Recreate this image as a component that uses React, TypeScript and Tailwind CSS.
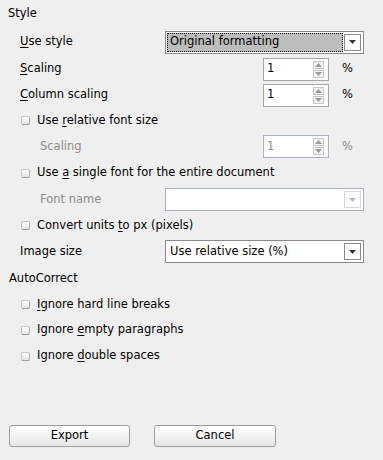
import type { ReactNode } from "react";

const Tri = ({ up, color = "#333" }: { up?: boolean; color?: string }) => (
  <svg width="7" height="4" viewBox="0 0 7 4">
    <path d={up ? "M0 4 L3.5 0 L7 4 Z" : "M0 0 L7 0 L3.5 4 Z"} fill={color} />
  </svg>
);

const Check = ({ children }: { children: ReactNode }) => (
  <div className="flex items-center">
    <div className="ml-[21px] w-[9px] h-[9px] rounded-[2px] border border-[#c4c4c4] border-b-[#9a9a9a] border-r-[#b0b0b0] bg-gradient-to-b from-white to-[#e4e4e4]" />
    <span className="ml-[7px]">{children}</span>
  </div>
);

const Spin = ({ disabled }: { disabled?: boolean }) => (
  <div className="ml-auto flex items-center">
    <div
      className={`w-[66px] h-[23px] bg-white border flex items-center pl-[3px] pr-[4px] ${
        disabled ? "border-[#a9b4c2] text-[#8c8c8c]" : "border-[#a6a6a6]"
      }`}
    >
      <span className="flex-1">1</span>
      <div className="flex flex-col gap-[1px]">
        <div className="w-[11px] h-[8px] border border-[#c6c6c6] bg-[#f4f4f4] flex items-center justify-center">
          <Tri up color="#999" />
        </div>
        <div className="w-[11px] h-[8px] border border-[#c6c6c6] bg-[#f4f4f4] flex items-center justify-center">
          <Tri color="#999" />
        </div>
      </div>
    </div>
    <span className={`ml-[13px] mr-[30px] ${disabled ? "text-[#8c8c8c]" : ""}`}>%</span>
  </div>
);

const Combo = ({
  text,
  focused,
  disabled,
}: {
  text?: string;
  focused?: boolean;
  disabled?: boolean;
}) => (
  <div
    className={`ml-auto mr-[19px] w-[199px] h-[23px] bg-white border flex ${
      disabled ? "border-[#a9b4c2]" : "border-[#8a8a8a]"
    }`}
  >
    <div className="flex-1 p-[1px] flex">
      {focused ? (
        <div className="flex-1 bg-[#bdbdbd] border border-dotted border-black flex items-center pl-[2px]">
          {text}
        </div>
      ) : (
        <div className="flex-1 flex items-center pl-[3px]">{text}</div>
      )}
    </div>
    <div
      className={`w-[17px] my-[2px] mr-[2px] border flex items-center justify-center bg-white ${
        disabled ? "border-[#d2d8df]" : "border-[#8a8a8a]"
      }`}
    >
      <Tri color={disabled ? "#b8b8b8" : "#333"} />
    </div>
  </div>
);

const U = ({ children }: { children: ReactNode }) => <span className="underline underline-offset-2">{children}</span>;

export default function App() {
  return (
    <div
      className="w-[383px] h-[460px] bg-[#efefef] text-black text-[11.5px] flex flex-col"
      style={{ fontFamily: '"DejaVu Sans", Verdana, sans-serif' }}
    >
      <div className="h-[28px] flex items-center pl-[8px]">Style</div>
      <div className="h-[28px] flex items-center pl-[20px]">
        <span>
          <U>U</U>se style
        </span>
        <Combo text="Original formatting" focused />
      </div>
      <div className="h-[26px] flex items-center pl-[20px]">
        <span>
          <U>S</U>caling
        </span>
        <Spin />
      </div>
      <div className="h-[26px] flex items-center pl-[20px]">
        <span>
          <U>C</U>olumn scaling
        </span>
        <Spin />
      </div>
      <div className="h-[25px] flex items-center">
        <Check>
          Use <U>r</U>elative font size
        </Check>
      </div>
      <div className="h-[27px] flex items-center pl-[40px] text-[#8c8c8c]">
        <span>Scaling</span>
        <Spin disabled />
      </div>
      <div className="h-[26px] flex items-center">
        <Check>
          Use <U>a</U> single font for the entire document
        </Check>
      </div>
      <div className="h-[27px] flex items-center pl-[40px]">
        <span className="text-[#8c8c8c]">Font name</span>
        <Combo disabled />
      </div>
      <div className="h-[25px] flex items-center">
        <Check>
          Convert units <U>t</U>o px (pixels)
        </Check>
      </div>
      <div className="h-[27px] flex items-center pl-[20px]">
        <span>Image size</span>
        <Combo text="Use relative size (%)" />
      </div>
      <div className="h-[27px] flex items-center pl-[9px]">AutoCorrect</div>
      <div className="h-[25px] flex items-center">
        <Check>
          <U>I</U>gnore hard line breaks
        </Check>
      </div>
      <div className="h-[26px] flex items-center">
        <Check>
          Ignore <U>e</U>mpty paragraphs
        </Check>
      </div>
      <div className="h-[26px] flex items-center">
        <Check>
          Ignore <U>d</U>ouble spaces
        </Check>
      </div>
      <div className="flex gap-[24px] pl-[9px] mt-[56px]">
        <button className="w-[121px] h-[22px] rounded-[3px] border border-[#9c9c9c] bg-gradient-to-b from-white to-[#e6e6e6] flex items-center justify-center">
          Export
        </button>
        <button className="w-[122px] h-[22px] rounded-[3px] border border-[#9c9c9c] bg-gradient-to-b from-white to-[#e6e6e6] flex items-center justify-center">
          Cancel
        </button>
      </div>
    </div>
  );
}
